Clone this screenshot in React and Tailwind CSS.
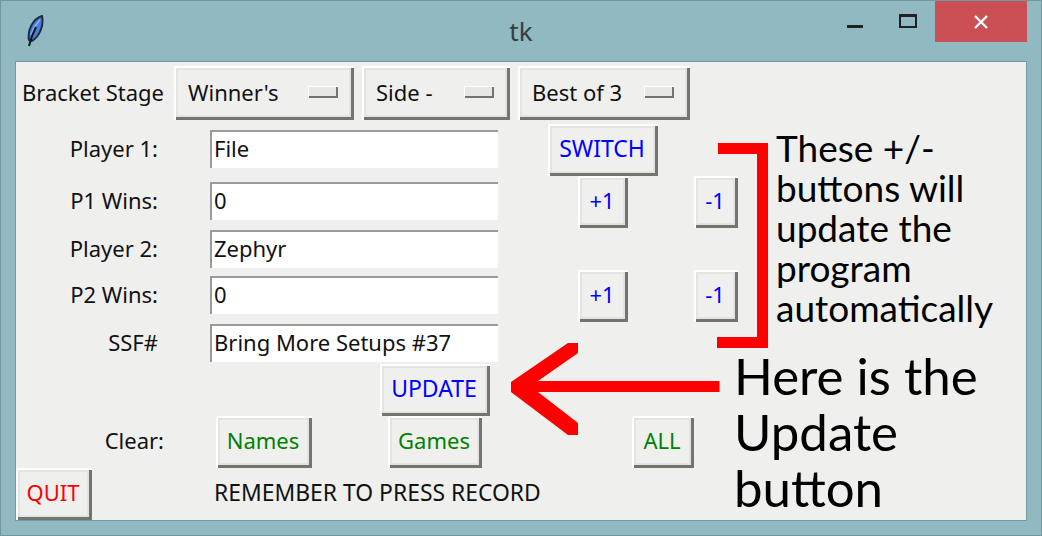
import React from 'react';

const bevel = "shadow-[inset_2px_2px_0_#ffffff,inset_-3px_-3px_0_#74746f,inset_4px_4px_0_#e3e4e2,inset_-5px_-5px_0_#e3e4e2] bg-[#eff0ee]";

const TkButton = ({ label, color, className }) => (
  <button className={`${bevel} ${color} ${className} flex items-center justify-center pb-[3px] pr-[2px] shrink-0`}>
    {label}
  </button>
);

const OptionMenu = ({ label, className }) => (
  <div className={`${bevel} ${className} flex items-center justify-between pl-[14px] pr-[16px] pb-[2px] shrink-0`}>
    <span>{label}</span>
    <span className="w-[30px] h-[12px] bg-[#e6e7e5] shadow-[inset_1px_1px_0_#ffffff,inset_-2px_-2px_0_#74746f]" />
  </div>
);

const Entry = ({ value, className }) => (
  <div className={`w-[288px] h-[38px] bg-white border-t-2 border-l-2 border-[#9a9b99] pl-[2px] leading-[33px] shrink-0 ${className}`}>
    {value}
  </div>
);

// labels in the form column are right aligned, the entries start at a fixed x
const FormRow = ({ label, value, height, lift, children }) => (
  <div className={`flex items-center shrink-0 ${height}`}>
    <span className={`w-[142px] text-right shrink-0 ${lift ? "mb-[4px]" : "mb-[2px]"}`}>{label}</span>
    <div className="w-[52px] shrink-0" />
    <Entry value={value} className={lift ? "mb-[2px]" : ""} />
    {children}
  </div>
);

const Feather = () => (
  <svg width="18" height="32" viewBox="0 0 18 32" className="ml-[25px] mt-[14px]">
    <path d="M3 25 C1 15 7 4 16 1 C18 10 14 21 6 26 Z" fill="#4a80d8" stroke="#1f2c3d" strokeWidth="2" />
    <path d="M5 20 C7 14 10 9 14 5" fill="none" stroke="#8fb4ee" strokeWidth="1.5" />
    <path d="M3 31 L6 21 L10 12" fill="none" stroke="#10161f" strokeWidth="2" />
  </svg>
);

const WindowBar = () => (
  <div className="h-[60px] relative flex items-start justify-end shrink-0">
    <div className="absolute left-0 top-0">
      <Feather />
    </div>
    <div className="absolute inset-x-0 top-[11px] text-center text-[26px] text-[#3a3d3e] leading-[38px]">tk</div>
    <div className="w-[16px] h-[3px] bg-[#222] mt-[24px]" />
    <div className="w-[18px] h-[14px] border-2 border-t-[3px] border-[#222] mt-[13px] ml-[36px]" />
    <div className="w-[92px] h-[41px] bg-[#cb5055] ml-[18px] flex items-center justify-center">
      <svg width="14" height="14" viewBox="0 0 14 14">
        <path d="M1 1 L13 13 M13 1 L1 13" stroke="#fff" strokeWidth="2.4" />
      </svg>
    </div>
    <div className="w-[14px]" />
  </div>
);

const Annotations = () => (
  <>
    <svg className="absolute left-[-1px] top-[-1px] pointer-events-none" width="1042" height="536">
      <path d="M718 148.5 H762.5 V342.5 H717" fill="none" stroke="#ff0000" strokeWidth="11" />
      <path d="M511 382 L568 343 H578 V353 L538 381 H719.5 V392 H538 L578 423 V435 H568 L511 392 Z" fill="#ff0000" />
    </svg>
    <div className="absolute left-[775px] top-[127px] text-[37px] leading-[40px] text-black font-['Lato',sans-serif] whitespace-pre">
      {"These +/-\nbuttons will\nupdate the\nprogram\nautomatically"}
    </div>
    <div className="absolute left-[733px] top-[347px] text-[51px] leading-[56px] text-black font-['Lato',sans-serif] whitespace-pre">
      {"Here is the\nUpdate\nbutton"}
    </div>
  </>
);

export default function App() {
  return (
    <div className="w-[1042px] h-[536px] relative overflow-hidden bg-[#90b9c2] border border-[#72979f] flex flex-col font-['Noto_Sans',sans-serif] text-[22px] text-[#111]">
      <WindowBar />
      <div className="ml-[14px] w-[1012px] h-[460px] bg-[#eff0ee] border border-[#729aa3] box-border flex flex-col pt-[4px]">
        {/* bracket stage */}
        <div className="flex items-center h-[54px] shrink-0">
          <span className="w-[158px] pl-[6px] pb-[2px] shrink-0">Bracket Stage</span>
          <OptionMenu label="Winner's" className="w-[180px] h-[54px]" />
          <OptionMenu label="Side -" className="w-[148px] h-[54px] ml-[8px]" />
          <OptionMenu label="Best of 3" className="w-[172px] h-[54px] ml-[8px]" />
        </div>
        <div className="h-[4px] shrink-0" />
        <FormRow label="Player 1:" value="File" height="h-[52px]" lift>
          <TkButton label="SWITCH" color="text-[#0000ff] text-[23px]" className="w-[110px] h-[52px] ml-[50px]" />
        </FormRow>
        <FormRow label="P1 Wins:" value="0" height="h-[52px]" lift>
          <TkButton label="+1" color="text-[#0000ff]" className="w-[50px] h-[52px] ml-[80px]" />
          <TkButton label="-1" color="text-[#0000ff]" className="w-[44px] h-[52px] ml-[66px]" />
        </FormRow>
        <FormRow label="Player 2:" value="Zephyr" height="h-[42px]" />
        <FormRow label="P2 Wins:" value="0" height="h-[52px]" lift>
          <TkButton label="+1" color="text-[#0000ff]" className="w-[50px] h-[52px] ml-[80px]" />
          <TkButton label="-1" color="text-[#0000ff]" className="w-[44px] h-[52px] ml-[66px]" />
        </FormRow>
        <FormRow label="SSF#" value="Bring More Setups #37" height="h-[42px]" />
        {/* update */}
        <div className="flex h-[52px] shrink-0">
          <TkButton label="UPDATE" color="text-[#0000ff] text-[23px]" className="w-[110px] h-[52px] ml-[364px]" />
        </div>
        {/* clear */}
        <div className="flex items-center h-[52px] shrink-0">
          <span className="w-[148px] text-right pb-[4px] shrink-0">Clear:</span>
          <TkButton label="Names" color="text-[#008000]" className="w-[96px] h-[52px] ml-[52px]" />
          <TkButton label="Games" color="text-[#008000]" className="w-[94px] h-[52px] ml-[76px]" />
          <TkButton label="ALL" color="text-[#008000]" className="w-[62px] h-[52px] ml-[150px]" />
        </div>
        {/* quit */}
        <div className="flex items-center h-[52px] shrink-0">
          <TkButton label="QUIT" color="text-[#ff0000]" className="w-[76px] h-[52px]" />
          <span className="ml-[122px] pb-[2px] text-[22.9px]">REMEMBER TO PRESS RECORD</span>
        </div>
      </div>
      <Annotations />
    </div>
  );
}
